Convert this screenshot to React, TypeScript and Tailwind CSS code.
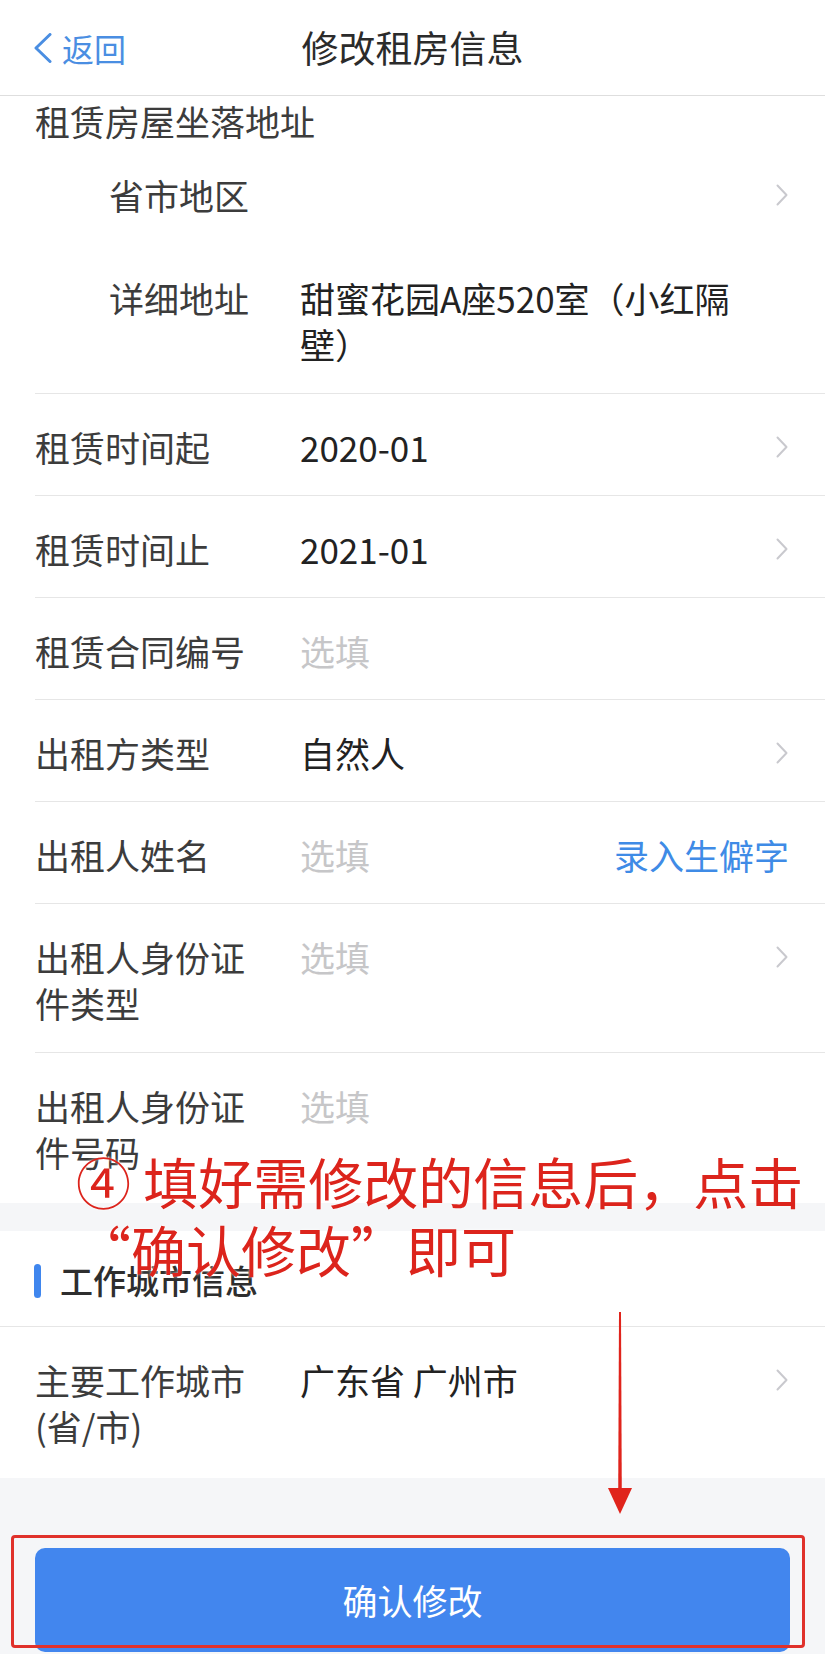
import React from "react";
import clsx from "clsx";

type RowProps = {
  label: string;
  value?: string;
  placeholder?: boolean;
  chevron?: boolean;
  indent?: boolean;
  border?: boolean;
  action?: string;
  pad?: string;
};

const Chevron = () => (
  <svg width="14" height="24" viewBox="0 0 14 24" fill="none">
    <path d="M2.5 2.5 L11.5 12 L2.5 21.5" stroke="#c9c9ce" strokeWidth="2" strokeLinecap="round" strokeLinejoin="round" />
  </svg>
);

const Row = ({ label, value, placeholder, chevron, indent, border = true, action, pad = "pt-[30px] pb-[25px]" }: RowProps) => (
  <div className={clsx("flex pr-[36px] text-[35px] leading-[46px]", pad, border && "border-b border-[#e6e6e6]")}>
    <div className={clsx("w-[265px] shrink-0 pr-[30px] text-[#3c3c3c]", indent && "pl-[74px]")}>{label}</div>
    <div className={clsx("flex-1 mr-[20px]", placeholder ? "text-[#c6c6c8]" : "text-[#222222]")}>{value}</div>
    {chevron && (
      <div className="h-[46px] flex items-center shrink-0">
        <Chevron />
      </div>
    )}
    {action && <div className="shrink-0 text-[#3f8be6]">{action}</div>}
  </div>
);

export default function App() {
  return (
    <div className="relative w-[825px] h-[1654px] overflow-hidden bg-[#f5f6f8] font-['Noto_Sans_CJK_SC','Noto_Sans',sans-serif]">
      {/* Nav bar */}
      <header className="h-[96px] bg-white border-b border-[#dedede] grid grid-cols-[1fr_auto_1fr] items-center">
        <div className="flex items-center pl-[33px] text-[32px] text-[#4a8ee2]">
          <svg width="20" height="30" viewBox="0 0 20 30" fill="none" className="mr-[9px]">
            <path d="M17 1.5 L3 15 L17 28.5" stroke="#4a8ee2" strokeWidth="3" strokeLinecap="round" strokeLinejoin="round" />
          </svg>
          <span>返回</span>
        </div>
        <h1 className="text-[37px] text-[#2b2b2b]">修改租房信息</h1>
        <div />
      </header>

      {/* Rental info */}
      <section className="bg-white">
        <div className="ml-[35px]">
          <div className="pt-[2px] text-[35px] leading-[46px] text-[#3c3c3c]">租赁房屋坐落地址</div>
          <Row label="省市地区" indent chevron border={false} pad="pt-[28px] pb-[28px]" />
          <Row label="详细地址" value="甜蜜花园A座520室（小红隔壁）" indent pad="pt-[29px] pb-[26px]" />
          <Row label="租赁时间起" value="2020-01" chevron />
          <Row label="租赁时间止" value="2021-01" chevron />
          <Row label="租赁合同编号" value="选填" placeholder />
          <Row label="出租方类型" value="自然人" chevron />
          <Row label="出租人姓名" value="选填" placeholder action="录入生僻字" />
          <Row label="出租人身份证件类型" value="选填" placeholder chevron pad="pt-[30px] pb-[26px]" />
          <Row label="出租人身份证件号码" value="选填" placeholder border={false} pad="pt-[30px] pb-[28px]" />
        </div>
      </section>

      {/* Work city */}
      <section className="bg-white mt-[28px]">
        <div className="h-[96px] border-b border-[#e6e6e6] flex items-center pl-[34px] pt-[4px]">
          <div className="w-[7px] h-[34px] rounded-full bg-[#3f86ee]" />
          <span className="ml-[19px] text-[33px] font-medium text-[#2e2e2e]">工作城市信息</span>
        </div>
        <div className="ml-[35px]">
          <Row label="主要工作城市(省/市)" value="广东省 广州市" chevron border={false} pad="pt-[30px] pb-[29px]" />
        </div>
      </section>

      <div className="pt-[70px] px-[35px]">
        <button className="w-full h-[104px] rounded-[10px] bg-[#4286ee] text-white text-[35px] flex items-center justify-center">
          确认修改
        </button>
      </div>

      {/* Annotation overlay */}
      <div className="absolute left-[76px] top-[1146px] text-[55px] leading-[68px] font-normal text-[#dc241c] [text-shadow:0_0_3px_rgba(255,255,255,0.9)]">
        <div>④ 填好需修改的信息后，点击</div>
        <div>“确认修改”即可</div>
      </div>
      <svg className="absolute left-[606px] top-[1310px]" width="28" height="206" viewBox="0 0 28 206">
        <path d="M13 2 L15 2 L15.8 184 L12.2 184 Z" fill="#e0241c" />
        <path d="M2 178 L26 178 L14 204 Z" fill="#e0241c" />
      </svg>
      <div className="absolute left-[11px] top-[1535px] w-[794px] h-[113px] border-[3px] border-[#e0312b] rounded-[4px]" />
    </div>
  );
}
